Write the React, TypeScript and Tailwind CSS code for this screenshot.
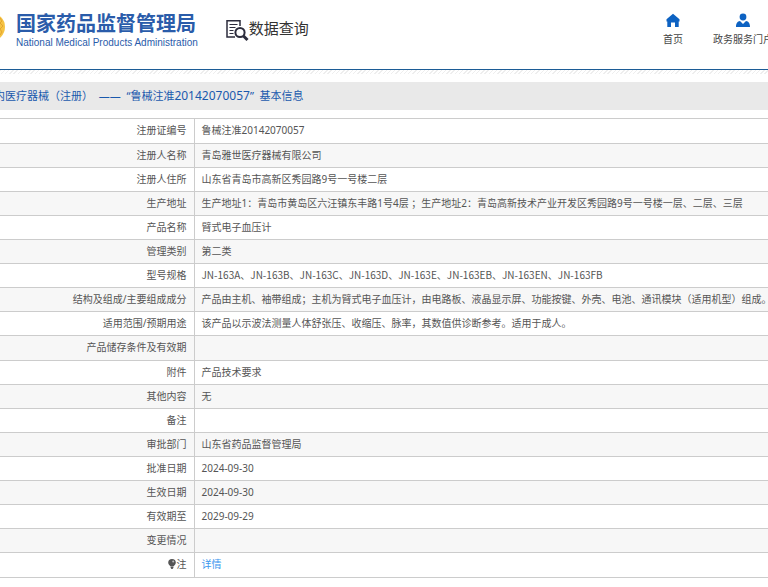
import type { ReactNode } from 'react';

type Row = { label: ReactNode; value?: ReactNode };

function BulbIcon() {
  return (
    <svg className="inline-block w-2 h-[10px] mr-px align-[-1px]" viewBox="0 0 8 10" aria-hidden="true">
      <path d="M4 0a3.8 3.8 0 0 0-3.8 3.7c0 1.7 1.400 2.500 2.200 3.600h3.200c.8-1.100 2.200-1.900 2.200-3.600A3.800 3.700 0 0 0 4 0z" fill="#555" />
      <path d="M2.600 7.600h2.800v1.200L4.600 10H3.400l-.8-1.200z" fill="#555" />
      <circle cx="5.200" cy="2.600" r="1" fill="#bbb" />
    </svg>
  );
}

const rows: Row[] = [
  { label: '注册证编号', value: '鲁械注准20142070057' },
  { label: '注册人名称', value: '青岛雅世医疗器械有限公司' },
  { label: '注册人住所', value: '山东省青岛市高新区秀园路9号一号楼二层' },
  {
    label: '生产地址',
    value: '生产地址1：青岛市黄岛区六汪镇东丰路1号4层 ；生产地址2：青岛高新技术产业开发区秀园路9号一号楼一层、二层、三层',
  },
  { label: '产品名称', value: '臂式电子血压计' },
  { label: '管理类别', value: '第二类' },
  {
    label: '型号规格',
    value: (
      <span className="font-['Noto_Sans_CJK_SC',sans-serif]">
        JN-163A、JN-163B、JN-163C、JN-163D、JN-163E、JN-163EB、JN-163EN、JN-163FB
      </span>
    ),
  },
  {
    label: '结构及组成/主要组成成分',
    value: '产品由主机、袖带组成；主机为臂式电子血压计，由电路板、液晶显示屏、功能按键、外壳、电池、通讯模块（适用机型）组成。',
  },
  { label: '适用范围/预期用途', value: '该产品以示波法测量人体舒张压、收缩压、脉率，其数值供诊断参考。适用于成人。' },
  { label: '产品储存条件及有效期' },
  { label: '附件', value: '产品技术要求' },
  { label: '其他内容', value: '无' },
  { label: '备注' },
  { label: '审批部门', value: '山东省药品监督管理局' },
  { label: '批准日期', value: '2024-09-30' },
  { label: '生效日期', value: '2024-09-30' },
  { label: '有效期至', value: '2029-09-29' },
  { label: '变更情况' },
  { label: <><BulbIcon />注</>, value: <a href="#detail" className="text-[#3b97ee]">详情</a> },
];

function Header() {
  return (
    <header className="flex items-start h-[69px] whitespace-nowrap">
      <svg className="w-[6px] h-8 mt-[11px] shrink-0" viewBox="0 0 6 32" aria-hidden="true">
        <circle cx="-9" cy="16" r="14" fill="#f5c344" />
        <path d="M0 7l2 3-2 2 3 3-3 3 2 3-2 3" stroke="#e3a42f" strokeWidth="1" fill="none" />
      </svg>
      <div className="ml-[10px] mt-[11px] text-[#2a5caa]">
        <div className="text-[20px] leading-[25px] font-bold">国家药品监督管理局</div>
        <div className="text-[10px] leading-[14px] font-['Liberation_Sans',sans-serif]">National Medical Products Administration</div>
      </div>
      <div className="flex items-start ml-7 mt-[18px] text-[#333]">
        <svg className="w-[23px] h-6 mt-px" viewBox="0 0 23 24" fill="none" stroke="#2d2d3d" aria-hidden="true">
          <path d="M14 7V1.700H1V18h8" strokeWidth="1.500" />
          <path d="M3.500 5.500h8M3.500 8.500h6M3.500 11.500h4M3.500 14.500h4" strokeWidth="1.200" />
          <circle cx="14" cy="13.500" r="4.600" strokeWidth="2" />
          <path d="M17.500 17l4 4" strokeWidth="3" />
        </svg>
        <h1 className="text-[15px] leading-5">数据查询</h1>
      </div>
      <nav className="flex ml-auto -mr-[5px] mt-[13px] gap-[30px] text-[10px] leading-[14px] text-[#444]">
        <a href="#home" className="flex flex-col items-center gap-[5px]">
          <svg className="w-[14px] h-[14px]" viewBox="0 0 14 14" fill="#0d62c2" aria-hidden="true">
            <path d="M7 .8L.5 6.200V8.500h.8V14H5V9.500h4V14h3.700V8.500h.8V6.200z" />
          </svg>
          首页
        </a>
        <a href="#portal" className="flex flex-col items-center gap-[5px]">
          <svg className="w-[14px] h-[14px]" viewBox="0 0 14 14" fill="#0d62c2" aria-hidden="true">
            <circle cx="7" cy="4" r="3.400" />
            <path d="M0 14c0-4 1.500-5.500 4-6L7 11l3-3c2.500.5 4 2 4 6z" />
          </svg>
          政务服务门户
        </a>
      </nav>
    </header>
  );
}

export default function App() {
  return (
    <div className="overflow-hidden bg-white font-['Noto_Sans','Noto_Sans_CJK_SC',sans-serif]">
      <Header />
      <div className="h-px bg-[#1c5c96]" />
      <div className="h-1 bg-[repeating-linear-gradient(135deg,#eeeeee_0_1px,#fff_1px_3px)]" />
      <h2 className="mt-2 h-7 -indent-[6px] bg-[#e9e9e9] text-[11px] leading-7 text-[#1a59ad] whitespace-nowrap">
        内医疗器械（注册）&nbsp; ——&nbsp; “鲁械注准<span className="text-[12px]">20142070057</span>”&nbsp; 基本信息
      </h2>
      <table className="mt-2 w-full table-fixed border-collapse text-[10px] leading-4 text-[#555] whitespace-nowrap">
        <tbody>
          {rows.map((row, i) => (
            <tr key={i} className="h-6 nth-[9n+1]:h-[25px] border-y border-[#ccc] even:bg-[#f7f7f7]">
              <th scope="row" className="w-[194px] pr-[7px] pb-0.5 border-r border-[#ccc] text-right font-normal">
                {row.label}
              </th>
              <td className="pl-[7px] pb-0.5">{row.value}</td>
            </tr>
          ))}
        </tbody>
      </table>
    </div>
  );
}
